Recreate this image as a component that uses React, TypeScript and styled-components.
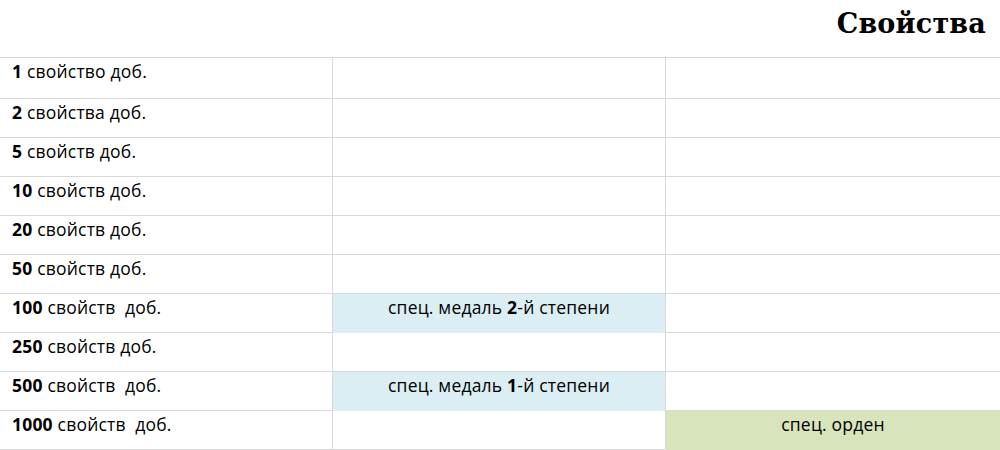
import styled, { createGlobalStyle } from "styled-components";

const GlobalStyle = createGlobalStyle`
  html, body {
    margin: 0;
    padding: 0;
    background: #ffffff;
  }
  body {
    width: 1000px;
    height: 450px;
    overflow: hidden;
    font-family: "Open Sans", "Noto Sans", sans-serif;
    color: #000;
  }
`;

const Sheet = styled.div`
  width: 1000px;
  display: flex;
  flex-direction: column;
`;

const Header = styled.div`
  height: 58px;
  display: flex;
  justify-content: flex-end;
  align-items: flex-start;
  padding-right: 14px;
  border-bottom: 1px solid #d9d9d9;
  box-sizing: border-box;
`;

const Title = styled.h1`
  margin: 8px 0 0;
  font-family: "DejaVu Serif", "Liberation Serif", serif;
  font-weight: 900;
  font-size: 27px;
  letter-spacing: 0.2px;
`;

const Row = styled.div<{ $tall?: boolean }>`
  display: grid;
  grid-template-columns: 333px 333px 334px;
  height: ${(p) => (p.$tall ? "41px" : "39px")};
  border-bottom: 1px solid #d9d9d9;
  box-sizing: border-box;
`;

const Cell = styled.div<{ $fill?: string; $center?: boolean }>`
  box-sizing: border-box;
  padding: 3px 12px 0;
  font-size: 17.5px;
  letter-spacing: 0.2px;
  line-height: 20px;
  white-space: pre;
  text-align: ${(p) => (p.$center ? "center" : "left")};
  background: ${(p) => p.$fill ?? "transparent"};
  border-right: 1px solid #d9d9d9;
  margin-bottom: ${(p) => (p.$fill ? "-1px" : "0")};
  &:last-child {
    border-right: none;
  }
`;

const rows: {
  n: string;
  word: string;
  mid?: string;
  order?: boolean;
}[] = [
  { n: "1", word: "свойство доб." },
  { n: "2", word: "свойства доб." },
  { n: "5", word: "свойств доб." },
  { n: "10", word: "свойств доб." },
  { n: "20", word: "свойств доб." },
  { n: "50", word: "свойств доб." },
  { n: "100", word: "свойств  доб.", mid: "2" },
  { n: "250", word: "свойств доб." },
  { n: "500", word: "свойств  доб.", mid: "1" },
  { n: "1000", word: "свойств  доб.", order: true },
];

const App = (): JSX.Element => (
  <Sheet>
    <GlobalStyle />
    <Header>
      <Title>Свойства</Title>
    </Header>
    {rows.map((r, i) => (
      <Row key={r.n} $tall={i === 0}>
        <Cell>
          <b>{r.n}</b> {r.word}
        </Cell>
        {r.mid ? (
          <Cell $fill="#daeef3" $center>
            спец. медаль <b>{r.mid}</b>-й степени
          </Cell>
        ) : (
          <Cell />
        )}
        {r.order ? (
          <Cell $fill="#d8e4bc" $center>
            спец. орден
          </Cell>
        ) : (
          <Cell />
        )}
      </Row>
    ))}
  </Sheet>
);

export default App;
